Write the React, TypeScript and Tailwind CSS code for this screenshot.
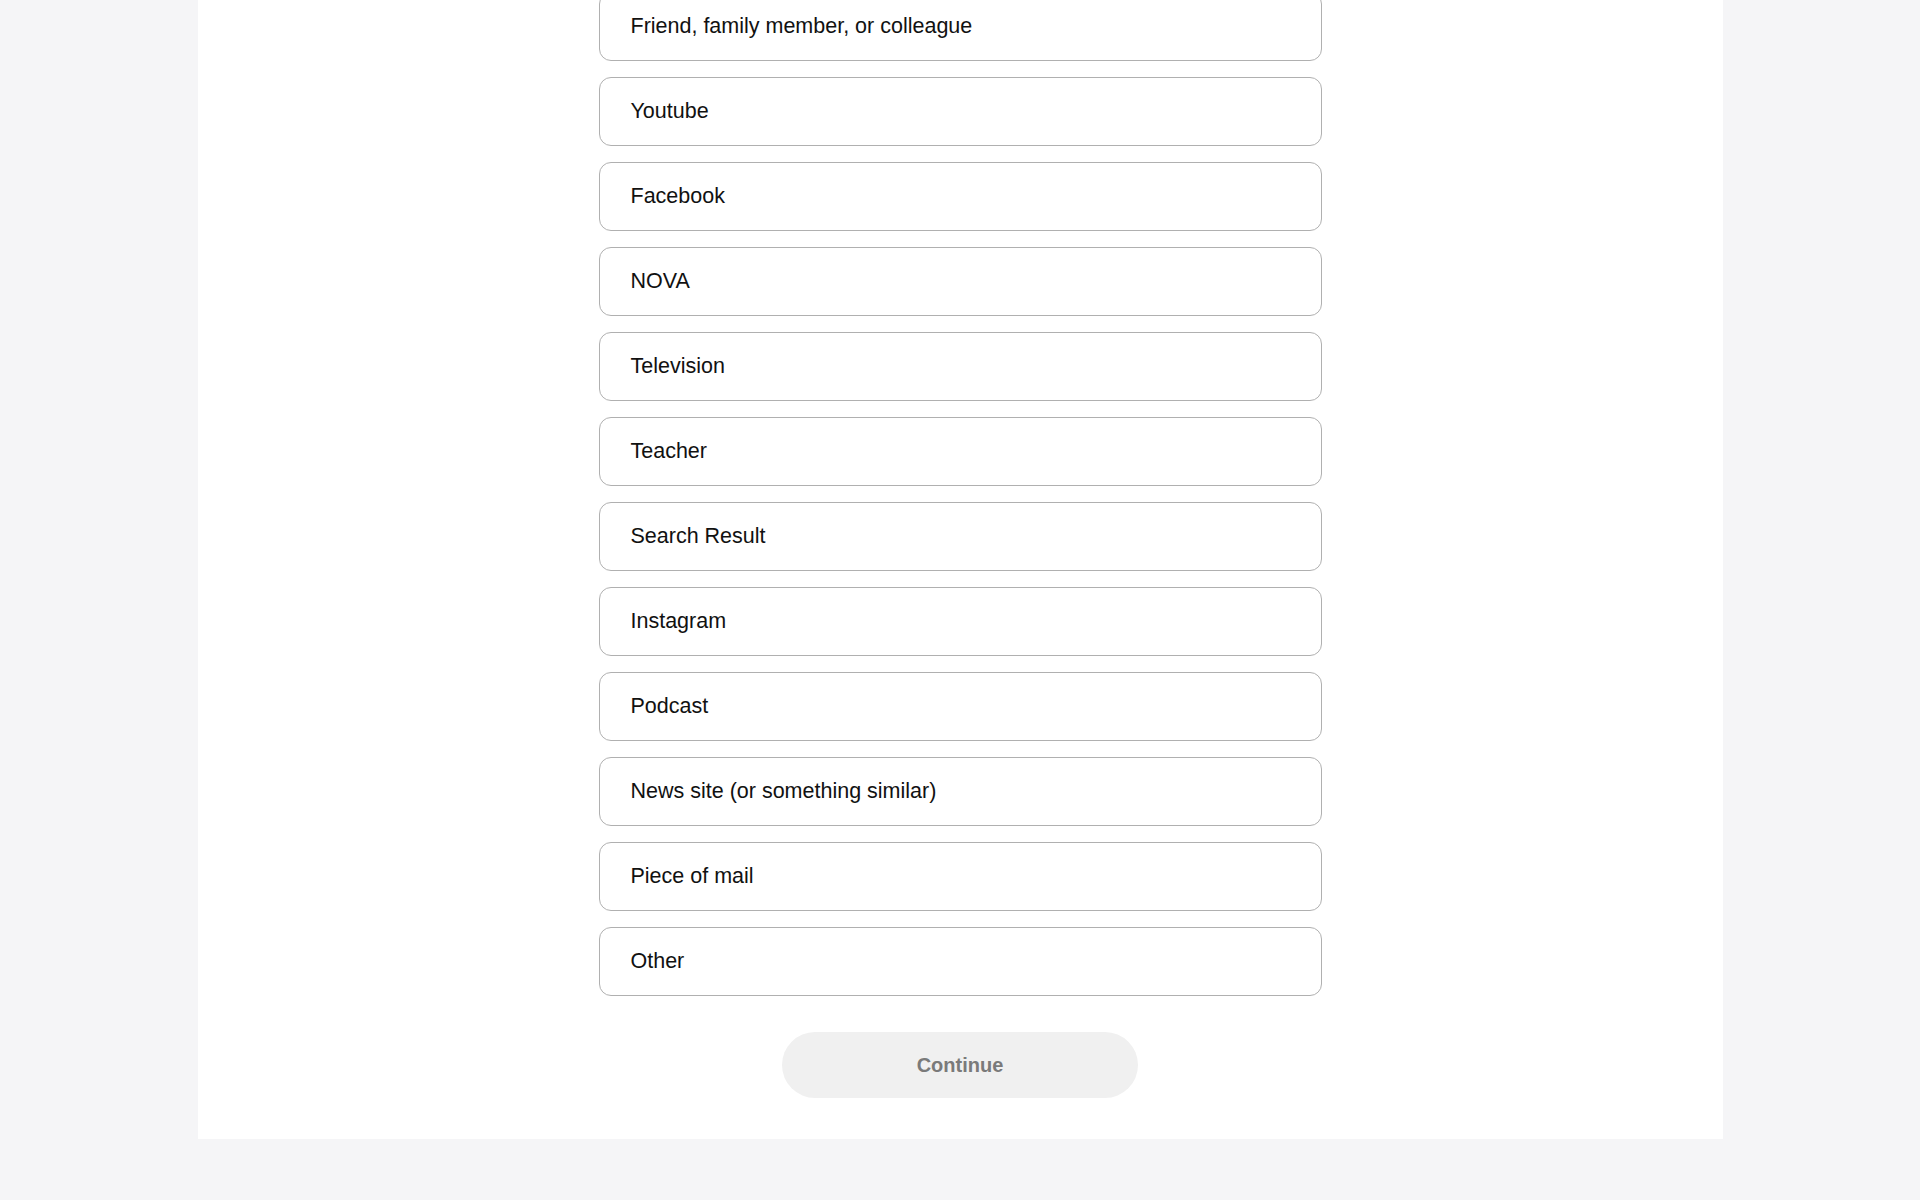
import React from "react";

const options = [
  "Friend, family member, or colleague",
  "Youtube",
  "Facebook",
  "NOVA",
  "Television",
  "Teacher",
  "Search Result",
  "Instagram",
  "Podcast",
  "News site (or something similar)",
  "Piece of mail",
  "Other",
];

export default function App() {
  return (
    <div
      className="min-h-screen w-full bg-[#f5f5f7] overflow-hidden"
      style={{ fontFamily: '"Liberation Sans", Arial, sans-serif' }}
    >
      <div className="mx-auto w-[1525px] bg-white pb-[41px] flex flex-col items-center">
        <div className="mt-[-8px] flex flex-col gap-[16px] w-[723px]">
          {options.map((o) => (
            <button
              key={o}
              type="button"
              className="h-[69px] w-full rounded-[12px] border border-[#b0b0b0] bg-white pl-[31px] text-left text-[21.5px] text-[#111111]"
            >
              {o}
            </button>
          ))}
        </div>
        <button
          type="button"
          className="mt-[36px] h-[66px] w-[356px] rounded-full bg-[#f0f0f0] text-[20px] font-bold text-[#7a7a7a]"
        >
          Continue
        </button>
      </div>
    </div>
  );
}
